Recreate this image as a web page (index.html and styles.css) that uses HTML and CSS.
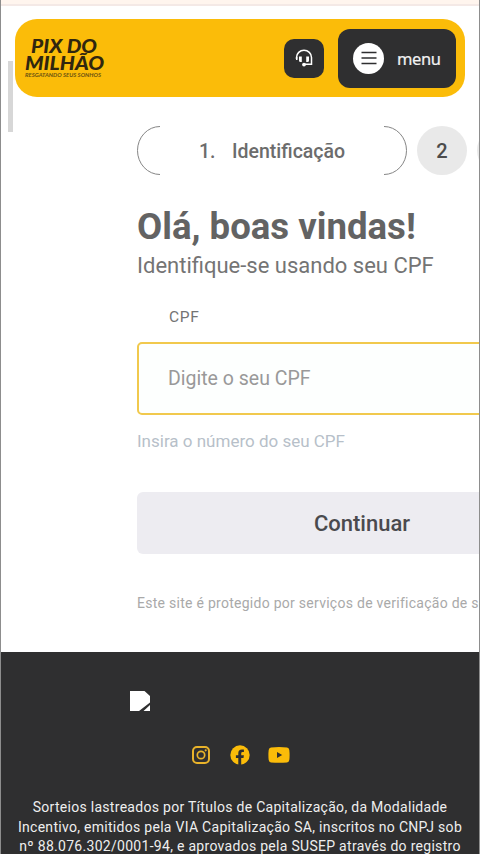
FILE: index.html
```
<!DOCTYPE html>
<html lang="pt-BR">
<head>
<meta charset="utf-8">
<title>Pix do Milhão</title>
<link rel="stylesheet" href="styles.css">
</head>
<body>
<div class="page">
  <div class="notice"></div>
  <div class="scroll-thumb"></div>
  <header class="header">
    <svg class="logo" viewBox="0 0 84 44" role="img" aria-label="Pix do Milhão">
      <text class="logo-name" x="8" y="16.5" textLength="66" lengthAdjust="spacingAndGlyphs">PIX DO</text>
      <text class="logo-name" x="2" y="33.5" textLength="79" lengthAdjust="spacingAndGlyphs">MILHÃO</text>
      <text class="logo-tag" x="2" y="40.5" textLength="76" lengthAdjust="spacingAndGlyphs">RESGATANDO SEUS SONHOS</text>
    </svg>
    <button class="support" aria-label="Atendimento">
      <svg class="icon-support" viewBox="0 0 18 18">
        <path d="M1.500 10V8.500a7.500 7.300 0 0 1 15 0V15.300H9.500" fill="none" stroke="#fff" stroke-width="1.500"/>
        <path d="M1 8h1.500v3H1zM4 7.500h2.800v5.500H5.500q-1.500 0-1.500-1.500zM11.200 7.500H14v4q0 1.500-1.500 1.500h-1.300z" fill="#fff"/>
        <circle cx="9" cy="15.600" r="1.900" fill="#fff"/>
      </svg>
    </button>
    <button class="menu">
      <span class="menu-icon"><svg viewBox="0 0 16 14"><path d="M.5 1.500h15M.5 7h15M.5 12.500h15" stroke="#2f2f30" stroke-width="1.500"/></svg></span>
      <span class="menu-label">menu</span>
    </button>
  </header>
  <main class="main">
    <div class="steps">
      <div class="step-current">
        <svg class="arc" viewBox="0 0 23 49"><path d="M23 .5A22.500 24 0 0 0 23 48.500"/></svg>
        <span class="step-number">1.</span><span class="step-name">Identificação</span>
        <svg class="arc arc-right" viewBox="0 0 23 49"><path d="M23 .5A22.500 24 0 0 0 23 48.500"/></svg>
      </div>
      <div class="step">2</div>
      <div class="step">3</div>
    </div>
    <h1 class="title">Olá, boas vindas!</h1>
    <p class="subtitle">Identifique-se usando seu CPF</p>
    <label class="label" for="cpf">CPF</label>
    <input class="field" id="cpf" placeholder="Digite o seu CPF">
    <p class="hint">Insira o número do seu CPF</p>
    <button class="submit">Continuar</button>
    <p class="protected">Este site é protegido por serviços de verificação de segurança</p>
  </main>
  <footer class="footer">
    <svg class="missing" viewBox="0 0 20 20"><path d="M0 0h14.500L20 5v6.500L9 20H0zM20 14v6h-6.500z" fill="#fff"/></svg>
    <div class="social">
      <svg class="instagram" viewBox="0 0 18 18"><rect x="1" y="1" width="16" height="16" rx="4" fill="none" stroke="#e9b32a" stroke-width="2"/><circle cx="9" cy="9" r="3.700" fill="none" stroke="#e9b32a" stroke-width="1.700"/><circle cx="13.700" cy="4.300" r="1.100" fill="#e9b32a"/></svg>
      <svg class="facebook" viewBox="0 0 20 20"><circle cx="10" cy="10" r="9.700" fill="#fbbc09"/><path d="M8.300 20v-7H5.900v-2.800h2.400V8.100q0-3.700 3.600-3.700 1.200 0 2 .2V7h-1.300q-1.400 0-1.400 1.400v1.800h2.700l-.4 2.800h-2.300v7z" fill="#2f2f30"/></svg>
      <svg class="youtube" viewBox="0 0 22 16"><path d="M3 .6q8-1 16 0 2 .2 2.300 2.400.6 5 0 10-.3 2.200-2.300 2.400-8 .8-16 0Q1 15.200.7 13 .1 8 .7 3 1 .800 3 .6z" fill="#fbbc09"/><path d="M9 5l5.200 3L9 11z" fill="#2f2f30"/></svg>
    </div>
    <div class="legal">
      <p>Sorteios lastreados por Títulos de Capitalização, da Modalidade</p>
      <p>Incentivo, emitidos pela VIA Capitalização SA, inscritos no CNPJ sob</p>
      <p>nº 88.076.302/0001-94, e aprovados pela SUSEP através do registro</p>
    </div>
  </footer>
</div>
</body>
</html>
```
FILE: styles.css
```
* { box-sizing: border-box; }
body { margin: 0; overflow: hidden; }
h1, p { margin: 0; white-space: nowrap; }
button { border: 0; padding: 0; font: inherit; }
svg { display: block; flex: none; }

.page {
  position: relative;
  width: 480px;
  height: 854px;
  overflow: hidden;
  background: #fff;
  border-left: 1px solid #8d8d8d;
  border-right: 1px solid #8d8d8d;
  font-family: Roboto, "Liberation Sans", sans-serif;
  color: #636363;
}
.notice { height: 6px; background: #fff5ee; border-bottom: 2px solid #f4e9e6; }
.scroll-thumb { position: absolute; left: 7px; top: 61px; width: 5px; height: 71px; background: #d7d7d7; }

.header {
  display: flex;
  align-items: center;
  height: 78px;
  margin: 13px 14px 0;
  padding: 0 9px 0 8px;
  border-radius: 22px;
  background: #fbbc09;
}
.logo { width: 84px; height: 44px; overflow: visible; }
.logo-name { font: italic 900 18px Lato, sans-serif; fill: #30260f; }
.logo-tag { font: italic 700 5px Lato, sans-serif; fill: #6b5312; }
.support {
  display: grid;
  place-items: center;
  width: 40px;
  height: 39px;
  margin-left: auto;
  border-radius: 10px;
  background: #2f2f30;
}
.icon-support { width: 18px; height: 18px; }
.menu {
  display: flex;
  align-items: center;
  width: 118px;
  height: 59px;
  margin-left: 14px;
  padding-left: 15px;
  border-radius: 12px;
  background: #2f2f30;
  color: #f3f3f3;
}
.menu-icon { display: grid; place-items: center; width: 31px; height: 31px; border-radius: 50%; background: #fff; }
.menu-icon svg { width: 16px; height: 14px; }
.menu-label { margin-left: 13px; font: 16.500px "Noto Sans", sans-serif; letter-spacing: -.4px; -webkit-text-stroke: .2px; }

.main { box-sizing: content-box; width: 450px; height: 526px; padding: 29px 0 0 136px; }
.steps { display: flex; gap: 10px; height: 49px; }
.step-current { display: flex; align-items: center; flex: none; width: 270px; font-size: 19.500px; font-weight: 500; color: #6c6c6c; }
.step-number, .step-name { padding-top: 1px; }
.arc { width: 23px; height: 49px; fill: none; stroke: #858585; stroke-width: 1; }
.arc-right { margin-left: auto; transform: scaleX(-1); }
.step-number { width: 33px; margin-left: 39px; }
.step {
  display: grid;
  place-items: center;
  flex: none;
  width: 50px;
  height: 49px;
  border-radius: 50%;
  background: #e9e9e9;
  font-size: 20px;
  font-weight: 500;
  color: #4c4c4c;
}
.title { margin-top: 30px; font-size: 36.600px; line-height: 44px; font-weight: 700; }
.subtitle { margin-top: 3px; font-size: 22px; line-height: 28px; color: #747474; }
.label { display: block; margin: 27px 0 0 32px; font-size: 15.500px; line-height: 20px; letter-spacing: .7px; color: #747474; }
.field {
  display: block;
  width: 450px;
  height: 73px;
  margin-top: 15px;
  padding: 0 29px;
  border: 2px solid #f1c94d;
  border-radius: 5px;
  background: #fdfffe;
  font: 19.500px Roboto, sans-serif;
  outline: 0;
}
.field::placeholder { color: #999; opacity: 1; }
.hint { margin-top: 15px; font-size: 17px; line-height: 22px; color: #b7bfc9; }
.submit {
  display: block;
  width: 450px;
  height: 62px;
  margin-top: 40px;
  border-radius: 6px;
  background: #edecf1;
  font-size: 22px;
  font-weight: 500;
  color: #4a4a4e;
}
.protected { margin-top: 39px; font-size: 14px; line-height: 20px; letter-spacing: .27px; color: #a9a9a9; }

.footer { height: 202px; margin: 0 -1px; padding: 39px 1px 0; background: #2f2f30; color: #eee; }
.missing { width: 20px; height: 20px; margin-left: 129px; }
.social { display: flex; align-items: center; height: 20px; margin: 34px 0 0 191px; }
.instagram { width: 18px; height: 18px; }
.facebook { width: 20px; height: 20px; margin-left: 20px; }
.youtube { width: 22px; height: 16px; margin-left: 18px; }
.legal { margin-top: 33px; text-align: center; font-size: 14px; line-height: 19.500px; letter-spacing: .29px; }
```
